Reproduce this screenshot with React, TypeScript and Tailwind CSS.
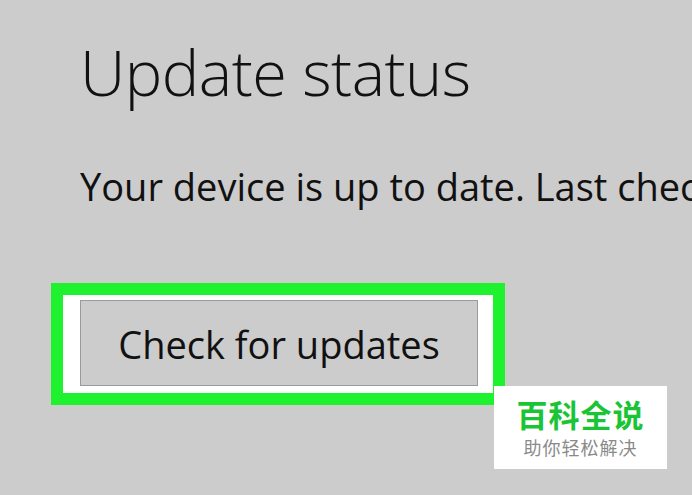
import React from "react";

const App: React.FC = () => {
  return (
    <div className="relative w-[692px] h-[495px] overflow-hidden bg-[#cccccc] font-['Open_Sans','Noto_Sans',sans-serif] text-[#111]">
      <div className="pl-[80px] pt-[32px]">
        {/* Title */}
        <h1 className="text-[63px] font-light leading-[80px] tracking-[-0.5px] whitespace-nowrap">
          Update status
        </h1>
        {/* Status line */}
        <p className="mt-[50px] text-[38px] leading-[48px] whitespace-nowrap">
          Your device is up to date. Last checked: Today
        </p>
      </div>

      {/* Highlighted button */}
      <div className="ml-[51px] mt-[73px] w-[454px] border-[12px] border-[#1ef22f] bg-white pl-[17px] pr-[15px] pt-[5px] pb-[7px]">
        <div className="flex h-[86px] items-center justify-center border border-[#9a9a9a] bg-[#cccccc] text-[38px] pt-[2px]">
          Check for updates
        </div>
      </div>

      {/* Watermark */}
      <div className="absolute left-[494px] top-[386px] flex h-[83px] w-[173px] flex-col items-center gap-[6px] bg-white pt-[11px] font-['Noto_Sans_CJK_SC',sans-serif]">
        <div className="text-[31px] font-bold leading-[34px] tracking-[1px] text-[#19c535]">
          百科全说
        </div>
        <div className="text-[18px] leading-[20px] tracking-[1px] text-[#8a8a8a]">
          助你轻松解决
        </div>
      </div>
    </div>
  );
};

export default App;
